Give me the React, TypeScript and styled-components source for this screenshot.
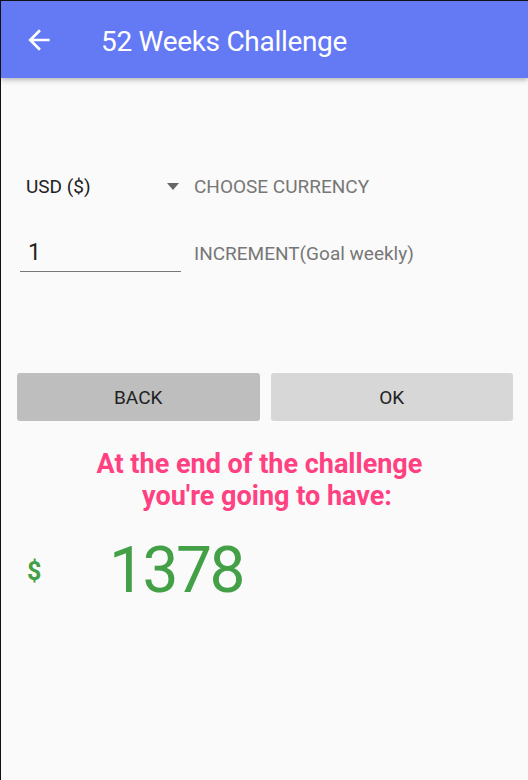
import React from "react";
import styled, { createGlobalStyle } from "styled-components";

const Global = createGlobalStyle`
  html, body { margin: 0; padding: 0; background: #fafafa; }
  body { font-family: Roboto, "Noto Sans", sans-serif; }
  * { box-sizing: border-box; }
`;

const Screen = styled.div`
  width: 528px;
  height: 780px;
  background: #fafafa;
  border-left: 1px solid #111;
  border-top: 1px solid #111;
  display: flex;
  flex-direction: column;
  overflow: hidden;
`;

const Toolbar = styled.header`
  height: 77px;
  flex: none;
  background: #6479f4;
  display: flex;
  align-items: center;
  padding-left: 22px;
  box-shadow: 0 2px 5px rgba(0, 0, 0, 0.28);
  position: relative;
  z-index: 1;
`;

const BackIcon = styled.svg`
  width: 32px;
  height: 32px;
  fill: #ffffff;
  flex: none;
`;

const Title = styled.h1`
  margin: 4px 0 0 46px;
  font-size: 28px;
  line-height: 33px;
  font-weight: 400;
  color: #ffffff;
  letter-spacing: -0.3px;
`;

const Content = styled.main`
  display: flex;
  flex-direction: column;
  padding: 0 15px 0 16px;
`;

const CurrencyRow = styled.div`
  display: flex;
  align-items: center;
  height: 40px;
  margin-top: 88px;
`;

const Spinner = styled.div`
  width: 162px;
  height: 40px;
  display: flex;
  align-items: center;
  justify-content: space-between;
  padding-left: 9px;
  font-size: 19px;
  color: #212121;
  flex: none;
`;

const Caret = styled.span`
  width: 0;
  height: 0;
  border-left: 6.5px solid transparent;
  border-right: 6.5px solid transparent;
  border-top: 7px solid #666;
`;

const FieldLabel = styled.span<{ $gap: number }>`
  font-size: 19px;
  color: #777;
  margin-left: ${(p) => p.$gap}px;
`;

const InputRow = styled.div`
  display: flex;
  align-items: center;
  margin-top: 29px;
`;

const Input = styled.div`
  width: 161px;
  height: 37px;
  margin-left: 3px;
  flex: none;
  padding-left: 8px;
  font-size: 23px;
  line-height: 36px;
  color: #222;
  border-bottom: 1px solid #777;
`;

const Buttons = styled.div`
  display: grid;
  grid-template-columns: 1fr 1fr;
  gap: 11px;
  margin-top: 101px;
`;

const Button = styled.button<{ $pressed?: boolean }>`
  height: 48px;
  border: none;
  border-radius: 3px;
  background: ${(p) => (p.$pressed ? "#bdbebd" : "#d6d7d6")};
  font-family: Roboto, "Noto Sans", sans-serif;
  font-size: 19px;
  color: #222;
  text-transform: uppercase;
  padding: 0;
`;

const Message = styled.p`
  margin: 27px 0 0 0;
  text-align: center;
  font-size: 27px;
  font-weight: 700;
  line-height: 32px;
  color: #ff4081;
`;

const Line = styled.span<{ $left?: number; $right?: number }>`
  display: block;
  padding-left: ${(p) => p.$left ?? 0}px;
  padding-right: ${(p) => p.$right ?? 0}px;
`;

const Amount = styled.div`
  display: flex;
  align-items: center;
  margin-top: 21px;
  padding-left: 10px;
`;

const Currency = styled.span`
  font-size: 25px;
  font-weight: 700;
  color: #43a047;
  width: 82px;
  flex: none;
`;

const Total = styled.span`
  font-size: 64px;
  color: #43a047;
  line-height: 76px;
  letter-spacing: -2.5px;
`;

export default function App() {
  return (
    <>
      <Global />
      <Screen>
        <Toolbar>
          <BackIcon viewBox="0 0 24 24">
            <path d="M20 11H7.83l5.59-5.59L12 4l-8 8 8 8 1.41-1.41L7.83 13H20v-2z" />
          </BackIcon>
          <Title>52 Weeks Challenge</Title>
        </Toolbar>
        <Content>
          <CurrencyRow>
            <Spinner>
              <span>USD ($)</span>
              <Caret />
            </Spinner>
            <FieldLabel $gap={15}>CHOOSE CURRENCY</FieldLabel>
          </CurrencyRow>
          <InputRow>
            <Input>1</Input>
            <FieldLabel $gap={13}>INCREMENT(Goal weekly)</FieldLabel>
          </InputRow>
          <Buttons>
            <Button $pressed>Back</Button>
            <Button>OK</Button>
          </Buttons>
          <Message>
            <Line $right={11}>At the end of the challenge</Line>
            <Line $left={4}>you're going to have:</Line>
          </Message>
          <Amount>
            <Currency>$</Currency>
            <Total>1378</Total>
          </Amount>
        </Content>
      </Screen>
    </>
  );
}
